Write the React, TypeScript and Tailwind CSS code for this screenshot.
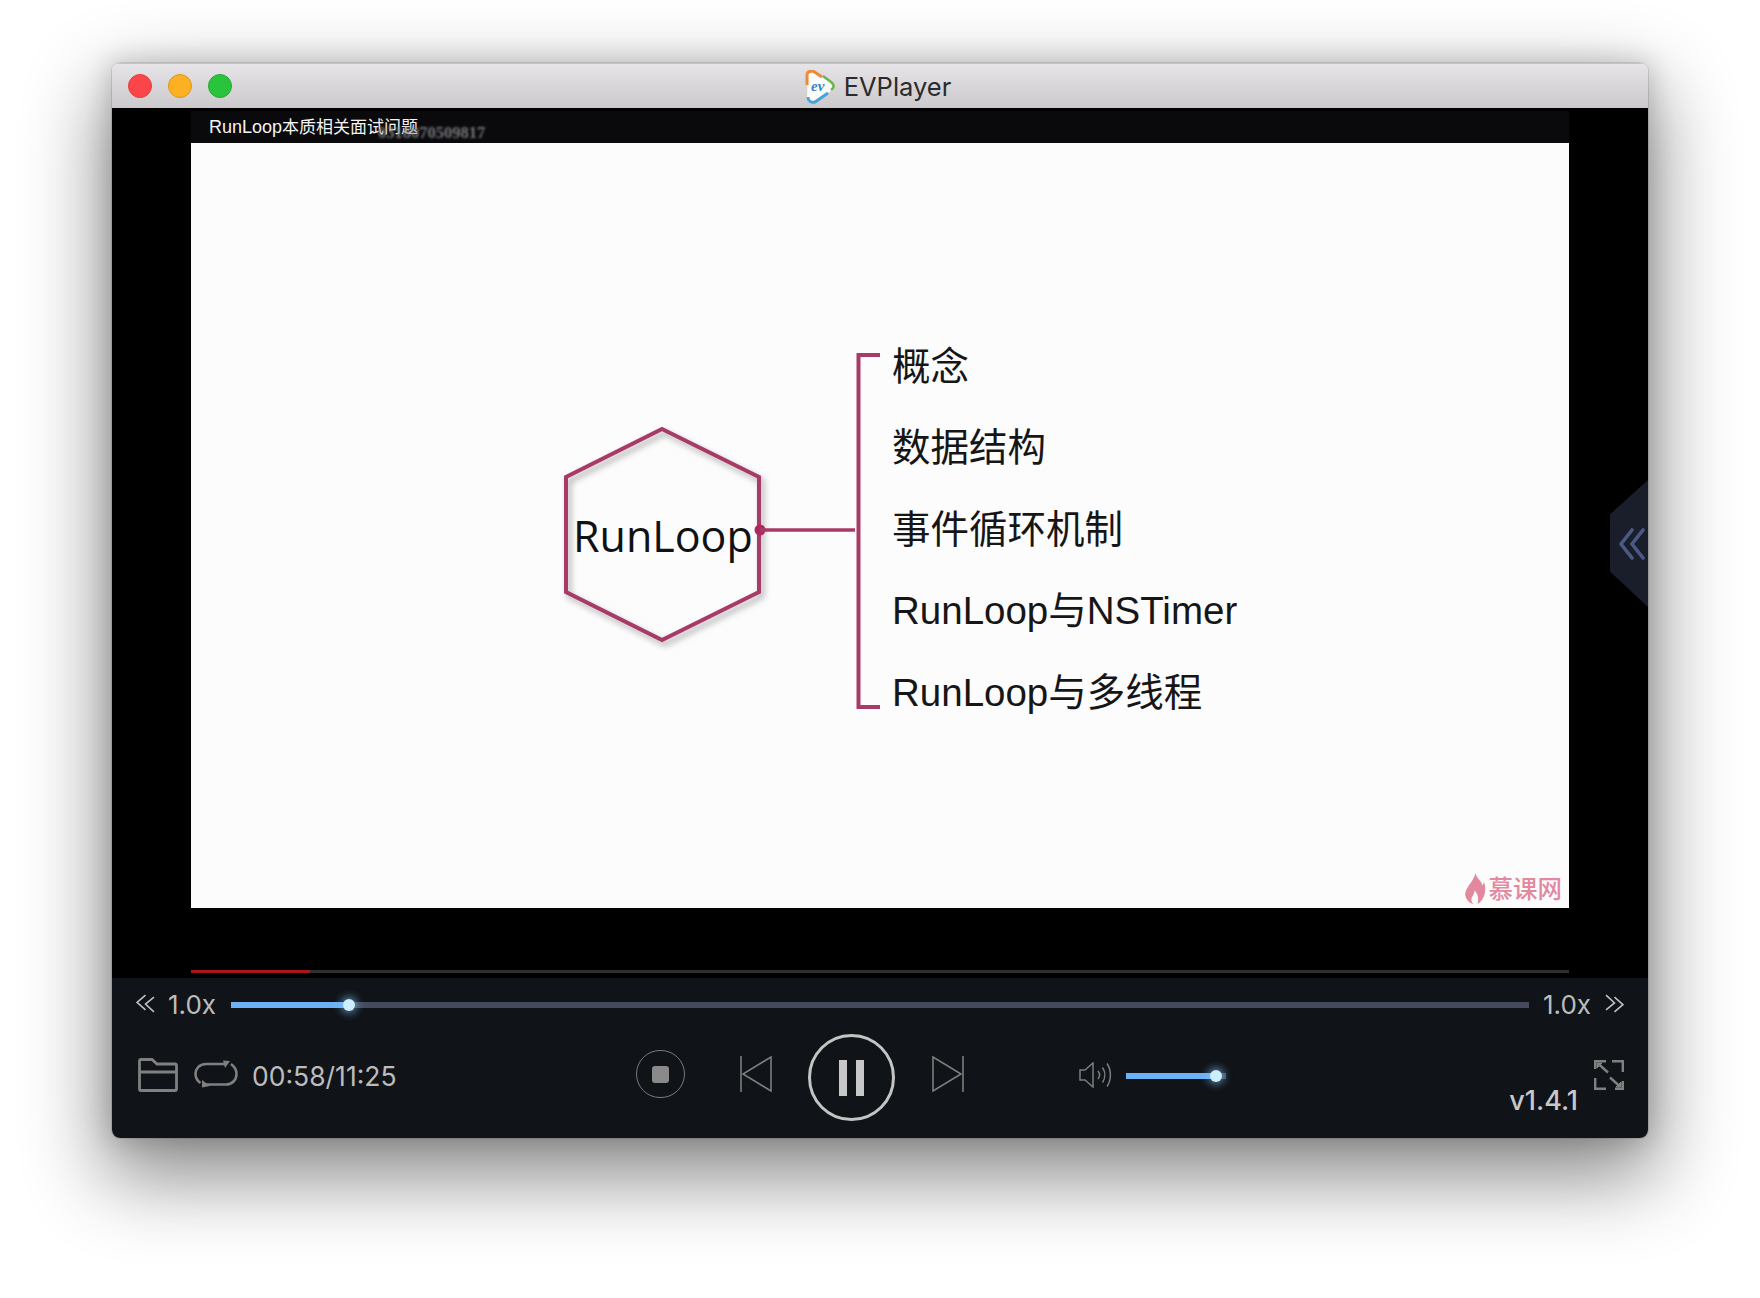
const ui = "font-['Inter','Noto_Sans_CJK_SC',sans-serif]"

function TrafficLight({ color, edge }: { color: string; edge: string }) {
  return <div className={`h-6 w-6 rounded-full border ${color} ${edge}`} />
}

function AppLogo() {
  return (
    <svg width="32" height="34" viewBox="0 0 32 34" className="mr-[8px]">
      <path d="M4 4 C3 1 6 0 9 1 L27 13 C31 15 31 18 28 20 L11 32 C7 34 4 32 3 28 Z" fill="#fbfbfb" />
      <path d="M4 27 C4 31 7 33 11 32 L24 23" fill="none" stroke="#45a4dc" strokeWidth="3" />
      <path d="M3 15 L3 5 C3 2 6 1 9 1 L18 7" fill="none" stroke="#ef8a3a" strokeWidth="3" />
      <path d="M19 6 L27 12 C31 15 30 18 27 20" fill="none" stroke="#6cb552" strokeWidth="2.5" />
      <text x="7" y="21" fontSize="15" fontStyle="italic" fontWeight="700" fill="#3c82c4" fontFamily="Liberation Serif, serif">ev</text>
    </svg>
  )
}

function Flame() {
  return (
    <svg width="21" height="31" viewBox="0 0 20 30">
      <path d="M10 0 C11 5 15 7 17 12 C18 10 18 9 18 8 C20 13 20 18 18 23 C16 27 14 29 12 30 C13 25 13 21 9 17 C9 21 6 23 6 26 C6 28 7 29 8 30 C4 29 1 26 0 21 C0 14 8 9 10 0 Z" fill="#e2899f" />
    </svg>
  )
}

function Chevrons({ right = false }: { right?: boolean }) {
  return (
    <svg width="19" height="19" viewBox="0 0 18 18" fill="none" stroke="#c0c0c0" strokeWidth="1.5" className={`-mt-[3px] ${right ? 'rotate-180' : ''}`}>
      <path d="M9 1 L1 8 L9 15" />
      <path d="M17 3 L9 9.5 L17 17" />
    </svg>
  )
}

function Slider({ fill, total }: { fill: string; total: string }) {
  return (
    <div className={`relative h-[6px] ${total} bg-[#454b5c]`}>
      <div className={`h-full ${fill} bg-[#6cb1f6]`} />
    </div>
  )
}

function Thumb({ className }: { className: string }) {
  return <div className={`absolute top-[-3px] h-3 w-3 rounded-full bg-[#cdeefc] shadow-[0_0_8px_2px_rgba(130,200,255,0.65)] ${className}`} />
}

function FolderIcon() {
  return (
    <svg width="40" height="34" viewBox="0 0 40 34" fill="none" stroke="#808080" strokeWidth="2.8" className="mt-[26px]">
      <path d="M1.5 13 V3 Q1.5 1.5 3 1.5 H14 L19 6 H37 Q38.5 6 38.5 7.5 V31 Q38.5 32.5 37 32.5 H3 Q1.5 32.5 1.5 31 Z" />
      <path d="M1.5 14 H38.5" />
    </svg>
  )
}

function LoopIcon() {
  return (
    <svg width="44" height="28" viewBox="0 0 44 28" fill="none" stroke="#808080" strokeWidth="2.6" className="ml-[16px] mt-[28px]">
      <path d="M31 4 H12 C5 4 1.5 9 1.5 14 C1.5 18 3.5 21 6.5 23" />
      <path d="M37 4 C40.5 6.5 42.5 10 42.5 14 C42.5 20 38 24.5 32 24.5 H12" />
      <path d="M29 0.5 L36 1 L31 8 Z M8 27.5 L8 20 L16 26 Z" fill="#808080" stroke="none" />
    </svg>
  )
}

function StopIcon() {
  return (
    <div className="ml-[241px] mt-[18px] flex h-12 w-[49px] items-center justify-center rounded-full border border-[#7a7a7a]">
      <div className="h-[17px] w-[17px] rounded-[3px] bg-[#8a8a8a]" />
    </div>
  )
}

function SkipIcon({ flip = false, className }: { flip?: boolean; className: string }) {
  return (
    <svg width="32" height="36" viewBox="0 0 32 36" fill="none" stroke="#7d7d7d" strokeWidth="1.6" className={`${className} ${flip ? 'rotate-180' : ''}`}>
      <path d="M1 0 V36" />
      <path d="M31 1 V35 L3 18 Z" />
    </svg>
  )
}

function PauseButton() {
  return (
    <div className="ml-[36px] mt-[2px] flex h-[87px] w-[87px] items-center justify-center gap-[9px] rounded-full border-[3px] border-[#c4c4c4]">
      <div className="h-9 w-2 bg-[#c8c8c8]" />
      <div className="h-9 w-2 bg-[#c8c8c8]" />
    </div>
  )
}

function SpeakerIcon() {
  return (
    <svg width="33" height="26" viewBox="0 0 33 26" fill="none" stroke="#7d7d7d" strokeWidth="1.5" className="ml-[115px] mt-[30px]">
      <path d="M1 8 H6 L14 1 V25 L6 18 H1 Z" />
      <path d="M19 9 C21 11.5 21 14.5 19 17" />
      <path d="M23.5 5.5 C26.5 10 26.5 16 23.5 20.5" />
      <path d="M28 1.5 C32.5 8 32.5 18 28 24.5" />
    </svg>
  )
}

function FullscreenIcon() {
  return (
    <svg width="30" height="30" viewBox="0 0 30 30" fill="none" stroke="#808080" strokeWidth="2.4" className="ml-[16px] mr-[24px] mt-[28px]">
      <path d="M1.2 9 V1.2 H12" />
      <path d="M18 1.2 H28.8 V12" />
      <path d="M1.2 18 V28.8 H12" />
      <path d="M21 28.8 H28.8 V21" />
      <path d="M4 3.5 L14 12.5" />
      <path d="M26 26.5 L16 17.5" />
      <path d="M3 3 H8 L3 8 Z" fill="#808080" strokeWidth="1" />
      <path d="M27 27 H22 L27 22 Z" fill="#808080" strokeWidth="1" />
    </svg>
  )
}

function Diagram() {
  return (
    <svg width="330" height="300" viewBox="0 0 330 300" fill="none" className="mt-[271px] ml-[370px] shrink-0 overflow-visible">
      <polygon points="101,15 198,63 198,178 101,226 5,178 5,63" stroke="#a83a67" strokeWidth="4" className="drop-shadow-[3px_4px_3px_rgba(0,0,0,0.32)]" />
      <circle cx="199" cy="116" r="5.5" fill="#b0275f" />
      <path d="M199 116 H294" stroke="#a83a67" strokeWidth="3.5" />
      <path d="M319 -59 H297.5 V293 H319" stroke="#a83a67" strokeWidth="4" />
      <text x="12" y="138" fontSize="43" fill="#111" fontFamily="Open Sans, sans-serif">RunLoop</text>
    </svg>
  )
}

function SlideList() {
  const rows = ['概念', '数据结构', '事件循环机制', 'RunLoop与NSTimer', 'RunLoop与多线程']
  return (
    <div className="ml-[1px] mt-[183px] flex flex-col text-[38.5px] text-[#161616] font-['Liberation_Sans','Noto_Sans_CJK_SC',sans-serif]">
      {rows.map((row) => (
        <div key={row} className="flex h-[81.5px] items-center whitespace-nowrap">
          <span>{row}</span>
        </div>
      ))}
    </div>
  )
}

export default function App() {
  return (
    <div className={`min-h-[1298px] bg-white pl-[112px] pt-[63px] ${ui}`}>
      <div className="w-[1536px] overflow-hidden rounded-t-[8px] rounded-b-[8px] shadow-[0_0_0_1px_rgba(0,0,0,0.1),0_0_24px_4px_rgba(0,0,0,0.14),0_32px_80px_8px_rgba(0,0,0,0.46)]">
        {/* Title bar */}
        <div className="relative flex h-[45px] items-center justify-center border-t border-[#c4c3c4] bg-gradient-to-b from-[#e6e4e6] to-[#cbc9cc] pr-[5px] pt-[2px]">
          <div className="absolute left-[16px] top-[10px] flex gap-4">
            <TrafficLight color="bg-[#fc4549]" edge="border-[#df3d41]" />
            <TrafficLight color="bg-[#fdb022]" edge="border-[#dc961c]" />
            <TrafficLight color="bg-[#2ac43c]" edge="border-[#24a933]" />
          </div>
          <AppLogo />
          <span className="text-[25.5px] text-[#2b2a2c]">EVPlayer</span>
        </div>

        {/* Video */}
        <div className="relative h-[870px] bg-black pt-[3px]">
          <div className="mx-auto w-[1378px]">
            <div className="relative flex h-[32px] items-center bg-[#0a0a0d] pl-[18px] text-[17px] text-[#f4f4f4]">
              <span className="whitespace-nowrap font-['Liberation_Sans','Noto_Sans_CJK_SC',sans-serif]"><span className="text-[18px]">RunLoop</span>本质相关面试问题</span>
              <span className="absolute left-[187px] top-[10px] text-[16.5px] font-bold text-[#8a8a8f] opacity-85 blur-[0.8px] font-['Liberation_Serif',serif]">0318070509817</span>
            </div>
            <div className="relative flex h-[765px] bg-[#fdfcfd]">
              <Diagram />
              <SlideList />
              <div className="absolute bottom-[4px] right-[7px] flex items-center gap-[3px] text-[24.5px] font-medium leading-none text-[#e2899f] font-['Noto_Sans_CJK_SC',sans-serif]">
                <Flame />
                <span>慕课网</span>
              </div>
            </div>
            <div className="mt-[62px] h-[3px] bg-[#2f2f31]">
              <div className="h-full w-[119px] bg-[#a9161d]" />
            </div>
          </div>
          {/* Side tab */}
          <div className="absolute right-0 top-[372px] flex h-[127px] w-[38px] items-center justify-center bg-[#1a1e2a] pl-[6px] [clip-path:polygon(100%_0,100%_100%,0_72%,0_27%)]">
            <svg width="26" height="32" viewBox="0 0 26 32" fill="none" stroke="#4a5a82" strokeWidth="3.6" strokeLinecap="round">
              <path d="M13 2 L2 16 L13 30" />
              <path d="M24 2 L13 16 L24 30" />
            </svg>
          </div>
        </div>

        {/* Controls */}
        <div className="h-[160px] bg-[#101318]">
          <div className="flex h-[54px] items-center pl-[24px] pr-[24px] text-[26px] text-[#bcbcbc]">
            <Chevrons />
            <span className="-mt-[2px] ml-[13px]">1.0x</span>
            <div className="relative ml-[15px] flex-1">
              <Slider fill="w-[118px]" total="w-full" />
              <Thumb className="left-[112px]" />
            </div>
            <span className="-mt-[2px] ml-[14px]">1.0x</span>
            <div className="ml-[14px] flex"><Chevrons right /></div>
          </div>
          <div className="flex h-[106px] items-start pl-[26px]">
            <FolderIcon />
            <LoopIcon />
            <span className="ml-[14px] mt-[27px] w-[143px] whitespace-nowrap text-[26.5px] leading-[34px] text-[#bcbcbc]">00:58/11:25</span>
            <StopIcon />
            <SkipIcon className="ml-[55px] mt-[24px]" />
            <PauseButton />
            <SkipIcon flip className="ml-[37px] mt-[24px]" />
            <SpeakerIcon />
            <div className="relative ml-[14px] mt-[41px] w-[100px]">
              <Slider fill="w-[90px]" total="w-full" />
              <Thumb className="left-[84px]" />
            </div>
            <span className="ml-auto mt-[52px] text-[27px] font-medium leading-[34px] text-[#c8c8c8]">v1.4.1</span>
            <FullscreenIcon />
          </div>
        </div>
      </div>
    </div>
  )
}
